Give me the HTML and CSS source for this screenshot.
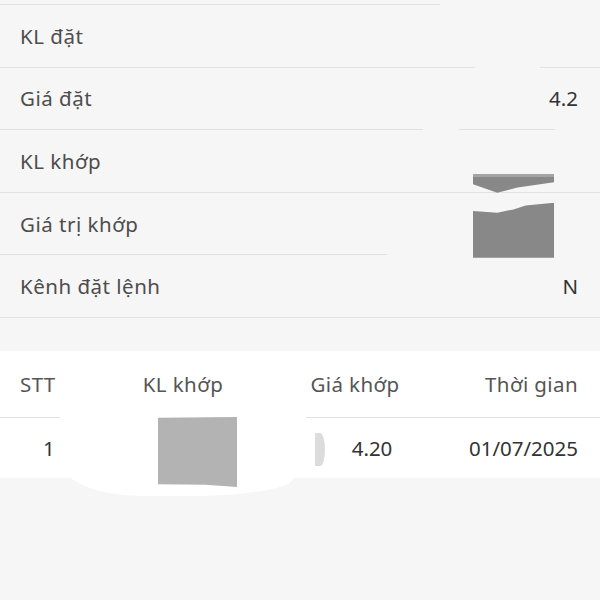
FILE: index.html
```html
<!DOCTYPE html>
<html lang="vi">
<head>
    <meta charset="UTF-8">
    <meta name="viewport" content="width=device-width, initial-scale=1.0">
    <title>Chi tiết lệnh</title>
    <link rel="stylesheet" href="styles.css">
</head>
<body>
    <div class="chi-tiet">
        <div class="vach vach-dau"></div>
        <div class="dong">
            <span class="nhan">KL đặt</span>
            <span class="gia-tri"></span>
        </div>
        <div class="vach vach-cat-1"></div>
        <div class="dong">
            <span class="nhan">Giá đặt</span>
            <span class="gia-tri">4.2</span>
        </div>
        <div class="vach vach-cat-2"></div>
        <div class="dong">
            <span class="nhan">KL khớp</span>
            <span class="gia-tri"></span>
        </div>
        <div class="vach"></div>
        <div class="dong">
            <span class="nhan">Giá trị khớp</span>
            <span class="gia-tri"></span>
            <span class="che che-tren"></span>
            <span class="che che-duoi"></span>
        </div>
        <div class="vach vach-cat-3"></div>
        <div class="dong">
            <span class="nhan">Kênh đặt lệnh</span>
            <span class="gia-tri">N</span>
        </div>
        <div class="vach"></div>
    </div>

    <div class="bang-khop">
        <div class="bang-dong tieu-de">
            <span class="cot-stt">STT</span>
            <span class="cot-kl">KL khớp</span>
            <span class="cot-gia">Giá khớp</span>
            <span class="cot-tg">Thời gian</span>
        </div>
        <div class="vach vach-bang"></div>
        <div class="bang-dong dong-so">
            <span class="cot-stt so-tt">1</span>
            <span class="cot-kl"></span>
            <span class="cot-gia gia-khop">4.20</span>
            <span class="cot-tg">01/07/2025</span>
        </div>
        <span class="xoa-trang"></span>
        <span class="che che-bang"></span>
        <span class="ban-nguyet"></span>
    </div>
</body>
</html>
```

FILE: styles.css
```css
body {
    font-family: "Noto Sans", "Open Sans", sans-serif;
    background-color: #f6f6f6;
    color: #4d4d4d;
    margin: 0;
    min-height: 100vh;
}
.chi-tiet {
    padding-top: 4px;
}
.vach {
    height: 1px;
    background: #e1e1e1;
}
.vach-dau {
    width: 440px;
}
.vach-cat-1 {
    background: linear-gradient(to right, #e1e1e1 0 475px, transparent 475px 540px, #e1e1e1 540px);
}
.vach-cat-2 {
    background: linear-gradient(to right, #e1e1e1 0 423px, transparent 423px 459px, #e1e1e1 459px 555px, transparent 555px);
}
.vach-cat-3 {
    width: 387px;
}
.dong {
    position: relative;
    height: 61.6px;
    display: flex;
    align-items: center;
    justify-content: space-between;
    padding: 0 22px 0 20px;
    font-size: 20.5px;
    letter-spacing: 0.5px;
}
.gia-tri {
    color: #333;
    letter-spacing: 0;
}
.che {
    position: absolute;
    background: #888;
}
/* vết che dữ liệu, nằm đè lên vạch phân cách */
.che-tren {
    left: 473px;
    top: -19px;
    width: 81px;
    height: 19px;
    background: linear-gradient(#a4a4a4 0 3px, #888 3px);
    clip-path: polygon(0 0, 100% 0, 100% 45%, 55% 72%, 30% 100%, 0 55%);
}
.che-duoi {
    left: 473px;
    top: 10px;
    width: 81px;
    height: 55px;
    clip-path: polygon(0 15%, 30% 18%, 50% 12%, 65% 5%, 100% 0, 100% 100%, 0 100%);
}
.bang-khop {
    position: relative;
    margin-top: 33px;
    background: #fff;
    color: #555;
}
.bang-dong {
    display: grid;
    grid-template-columns: 70px 186px 158px 1fr;
    align-items: center;
    height: 66px;
    padding: 0 22px 0 20px;
    font-size: 20.5px;
    letter-spacing: 0.4px;
}
.dong-so {
    height: 60px;
    color: #333;
    letter-spacing: 0;
}
.vach-bang {
    background: linear-gradient(to right, #e1e1e1 0 96px, transparent 96px 306px, #e1e1e1 306px);
}
.cot-kl, .cot-gia {
    text-align: center;
}
.cot-tg {
    text-align: right;
}
.so-tt {
    padding-left: 23px;
}
.gia-khop {
    padding-left: 34px;
}
.xoa-trang {
    position: absolute;
    left: 60px;
    top: 66px;
    width: 233px;
    height: 79px;
    background: #fff;
    border-radius: 0 0 45% 35% / 0 0 22% 45%;
}
.che-bang {
    left: 158px;
    top: 66px;
    width: 79px;
    height: 70px;
    background: #b3b3b3;
    clip-path: polygon(0 1%, 100% 0, 100% 100%, 60% 97%, 0 96%);
}
.ban-nguyet {
    position: absolute;
    left: 315px;
    top: 82px;
    width: 10px;
    height: 33px;
    background: #dcdcdc;
    border-radius: 0 50% 50% 0 / 0 50% 50% 0;
}
```
